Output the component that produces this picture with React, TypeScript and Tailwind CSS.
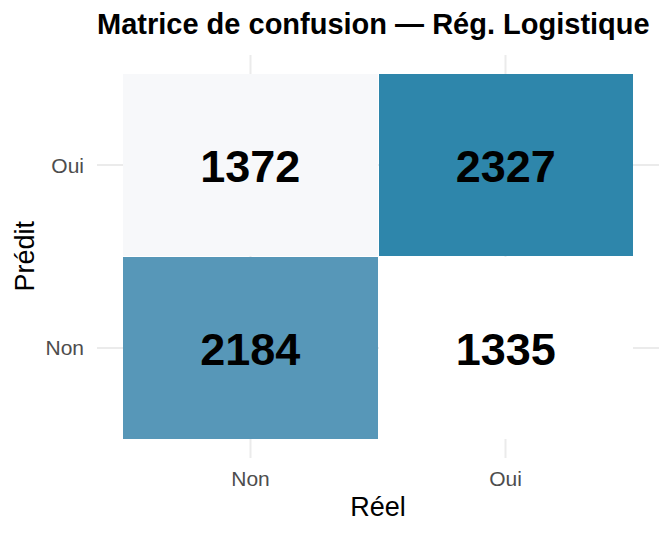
const cells = [
  { value: 1372, bg: 'bg-[#f7f8fa]' },
  { value: 2327, bg: 'bg-[#2e86ab]' },
  { value: 2184, bg: 'bg-[#5797b8]' },
  { value: 1335, bg: 'bg-white' },
]

function Panel() {
  return (
    <div className="relative w-[562px] h-[403px] px-[26px] py-[19px]">
      {/* grid lines sit under the tiles */}
      <svg className="absolute inset-0" width={562} height={403}>
        <line x1={0} x2={562} y1={110} y2={110} stroke="#ebebeb" strokeWidth={2} />
        <line x1={0} x2={562} y1={293} y2={293} stroke="#ebebeb" strokeWidth={2} />
        <line x1={153.5} x2={153.5} y1={0} y2={403} stroke="#ebebeb" strokeWidth={2} />
        <line x1={408.5} x2={408.5} y1={0} y2={403} stroke="#ebebeb" strokeWidth={2} />
      </svg>
      <div className="relative grid grid-cols-2 grid-rows-2 gap-px h-full">
        {cells.map((c) => (
          <div key={c.value} className={`${c.bg} flex items-center justify-center`}>
            <span className="text-[45px] leading-none font-bold text-black pt-[2px]">{c.value}</span>
          </div>
        ))}
      </div>
    </div>
  )
}

export default function App() {
  return (
    <div className="w-[672px] h-[537px] bg-white flex flex-col font-['Liberation_Sans',Arial,sans-serif]">
      <div className="h-[55px] pl-[97px] pt-[10px]">
        <h1 className="text-[29px] leading-none font-bold text-black whitespace-nowrap">
          Matrice de confusion — Rég. Logistique
        </h1>
      </div>

      <div className="flex h-[403px]">
        <div className="w-[12px]" />
        <div className="w-[27px] flex items-center justify-center">
          <span className="[writing-mode:vertical-rl] rotate-180 text-[27px] leading-none text-black">
            Prédit
          </span>
        </div>
        <div className="w-[45px] flex flex-col py-[19px] text-[21px] leading-none text-[#4d4d4d]">
          <div className="flex-1 flex items-center justify-end">Oui</div>
          <div className="flex-1 flex items-center justify-end">Non</div>
        </div>
        <div className="w-[13px]" />
        <Panel />
      </div>

      <div className="pl-[97px] pt-[10px]">
        <div className="w-[562px] px-[26px] grid grid-cols-2 text-center text-[21px] leading-none text-[#4d4d4d]">
          <div>Non</div>
          <div>Oui</div>
        </div>
      </div>

      <div className="pl-[97px] pt-[5px]">
        <div className="w-[562px] text-center text-[27px] leading-none text-black">Réel</div>
      </div>
    </div>
  )
}
